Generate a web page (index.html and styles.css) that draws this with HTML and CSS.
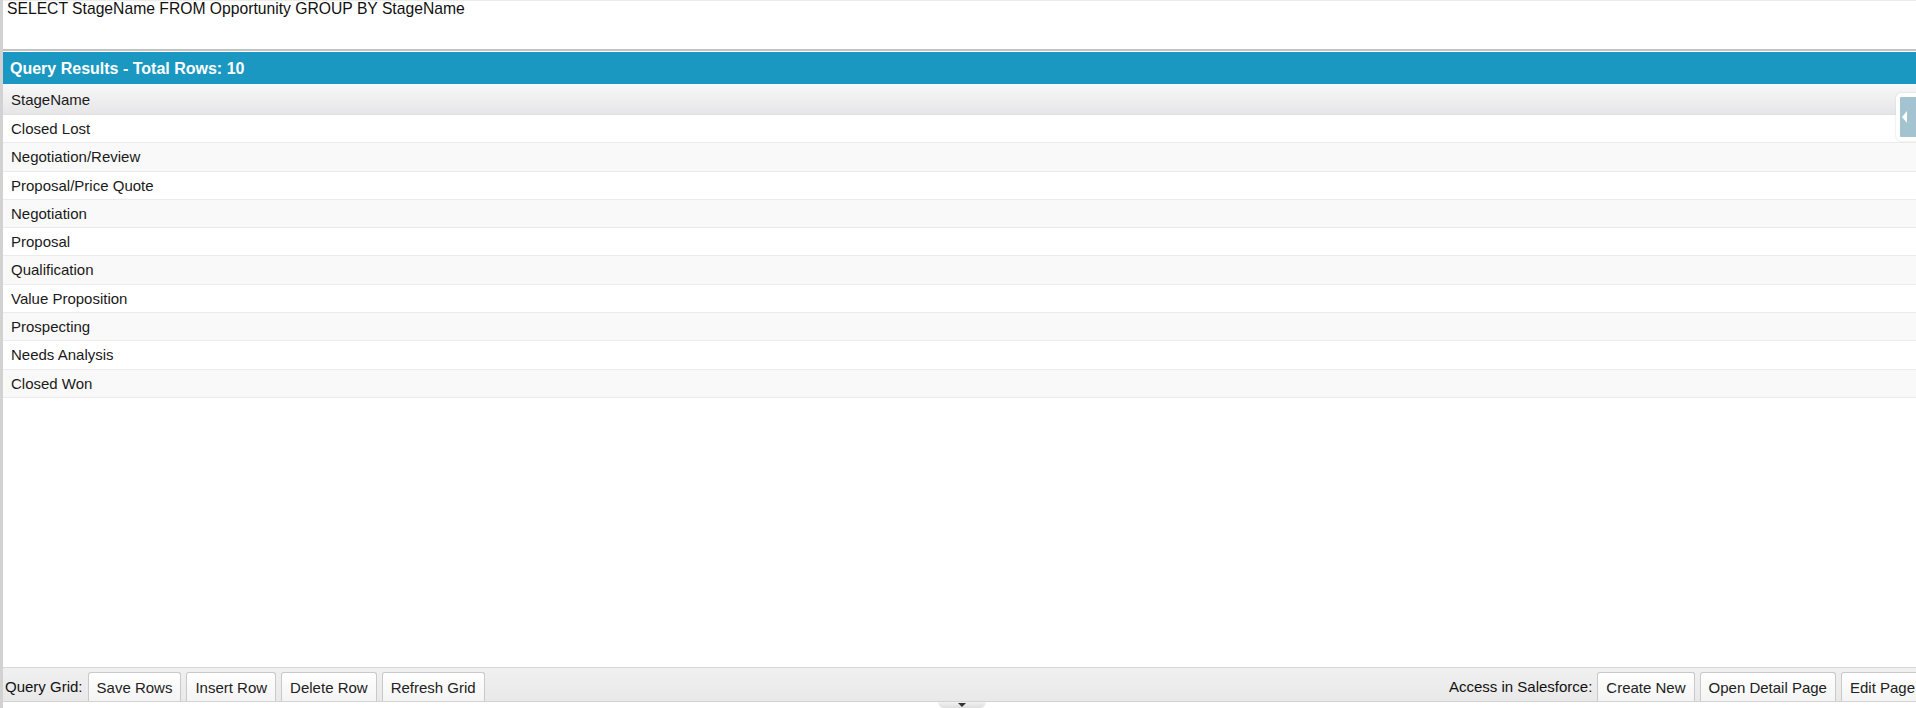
FILE: index.html
```html
<!DOCTYPE html>
<html>
<head>
<meta charset="utf-8">
<link rel="stylesheet" href="styles.css">
</head>
<body>
<div class="page">
  <div class="query">SELECT StageName FROM Opportunity GROUP BY StageName</div>
  <div class="sep"></div>
  <div class="results-header">Query Results - Total Rows: 10</div>
  <div class="grid">
    <div class="col-header">StageName</div>
    <div class="row">Closed Lost</div>
    <div class="row alt">Negotiation/Review</div>
    <div class="row">Proposal/Price Quote</div>
    <div class="row alt">Negotiation</div>
    <div class="row">Proposal</div>
    <div class="row alt">Qualification</div>
    <div class="row">Value Proposition</div>
    <div class="row alt">Prospecting</div>
    <div class="row">Needs Analysis</div>
    <div class="row alt">Closed Won</div>
  </div>
  <div class="toolbar">
    <div class="group">
      <span class="label">Query Grid:</span>
      <span class="btn">Save Rows</span>
      <span class="btn">Insert Row</span>
      <span class="btn">Delete Row</span>
      <span class="btn">Refresh Grid</span>
    </div>
    <div class="group right">
      <span class="label">Access in Salesforce:</span>
      <span class="btn">Create New</span>
      <span class="btn">Open Detail Page</span>
      <span class="btn">Edit Page</span>
    </div>
  </div>
  <div class="bottom"></div>
  <div class="side-tab"><svg width="12" height="38" viewBox="0 0 12 38"><path d="M7 13 L2 19 L7 25 Z" fill="#ffffff"/></svg></div>
  <div class="bottom-tab"><span class="arrow"></span></div>
</div>
</body>
</html>
```
FILE: styles.css
```css
html, body {
  margin: 0;
  padding: 0;
  background: #ffffff;
}
body {
  font-family: "Liberation Sans", Arial, sans-serif;
  color: #1a1a1a;
  overflow: hidden;
}
.page {
  position: relative;
  width: 1916px;
  height: 708px;
  display: flex;
  flex-direction: column;
  box-sizing: border-box;
  border-left: 3px solid #d2d2d2;
  overflow: hidden;
}
.query {
  height: 49px;
  box-sizing: border-box;
  border-top: 1px solid #ececec;
  padding: 0 0 0 4px;
  font-size: 15.7px;
  line-height: 15px;
  color: #111;
}
.sep {
  height: 3px;
  box-sizing: border-box;
  border-top: 2px solid #c4c4c4;
  background: #ffffff;
}
.results-header {
  height: 32px;
  background: #1a98c2;
  color: #ffffff;
  font-weight: bold;
  font-size: 16px;
  line-height: 33px;
  padding-left: 7px;
}
.grid {
  flex: 1;
  display: flex;
  flex-direction: column;
}
.col-header {
  height: 31px;
  box-sizing: border-box;
  background: linear-gradient(#f8f8f8, #e6e6e8);
  border-bottom: 1px solid #e0e0e0;
  padding-left: 8px;
  font-size: 15px;
  line-height: 31px;
}
.row {
  height: 28.3px;
  box-sizing: border-box;
  border-bottom: 1px solid #ebebeb;
  padding-left: 8px;
  font-size: 15px;
  line-height: 28px;
  background: #ffffff;
}
.row.alt {
  background: #f9f9f9;
}
.toolbar {
  height: 35px;
  box-sizing: border-box;
  border-top: 1px solid #d6d6d6;
  border-bottom: 1px solid #d2d2d2;
  background: linear-gradient(#f0f0f0, #e9e9e9);
  display: flex;
  justify-content: space-between;
  align-items: flex-end;
  font-size: 15px;
}
.group {
  display: flex;
  align-items: flex-end;
  gap: 5px;
  height: 100%;
}
.group.right {
  margin-right: -8px;
}
.label {
  align-self: center;
  padding: 3px 0 0 2px;
  color: #111;
}
.btn {
  height: 29px;
  box-sizing: border-box;
  border: 1px solid #c9c9c9;
  border-bottom: none;
  border-radius: 3px 3px 0 0;
  background: linear-gradient(#ffffff, #f4f4f4);
  padding: 0 8px;
  line-height: 30px;
  color: #222;
}
.bottom {
  height: 6px;
}
.side-tab {
  position: absolute;
  right: -6px;
  top: 93px;
  width: 18px;
  height: 40px;
  border: 4px solid #ffffff;
  border-radius: 5px;
  background: #a3c3d1;
  box-shadow: 0 0 2px #d0d0d0;
  display: flex;
  align-items: center;
}
.bottom-tab {
  position: absolute;
  left: 935px;
  bottom: 0;
  width: 48px;
  height: 6px;
  background: linear-gradient(#f2f2f2, #dedede);
  border-radius: 0 0 8px 8px;
  display: flex;
  justify-content: center;
}
.arrow {
  width: 0;
  height: 0;
  margin-top: 1px;
  border-left: 4px solid transparent;
  border-right: 4px solid transparent;
  border-top: 4px solid #333;
}
```
